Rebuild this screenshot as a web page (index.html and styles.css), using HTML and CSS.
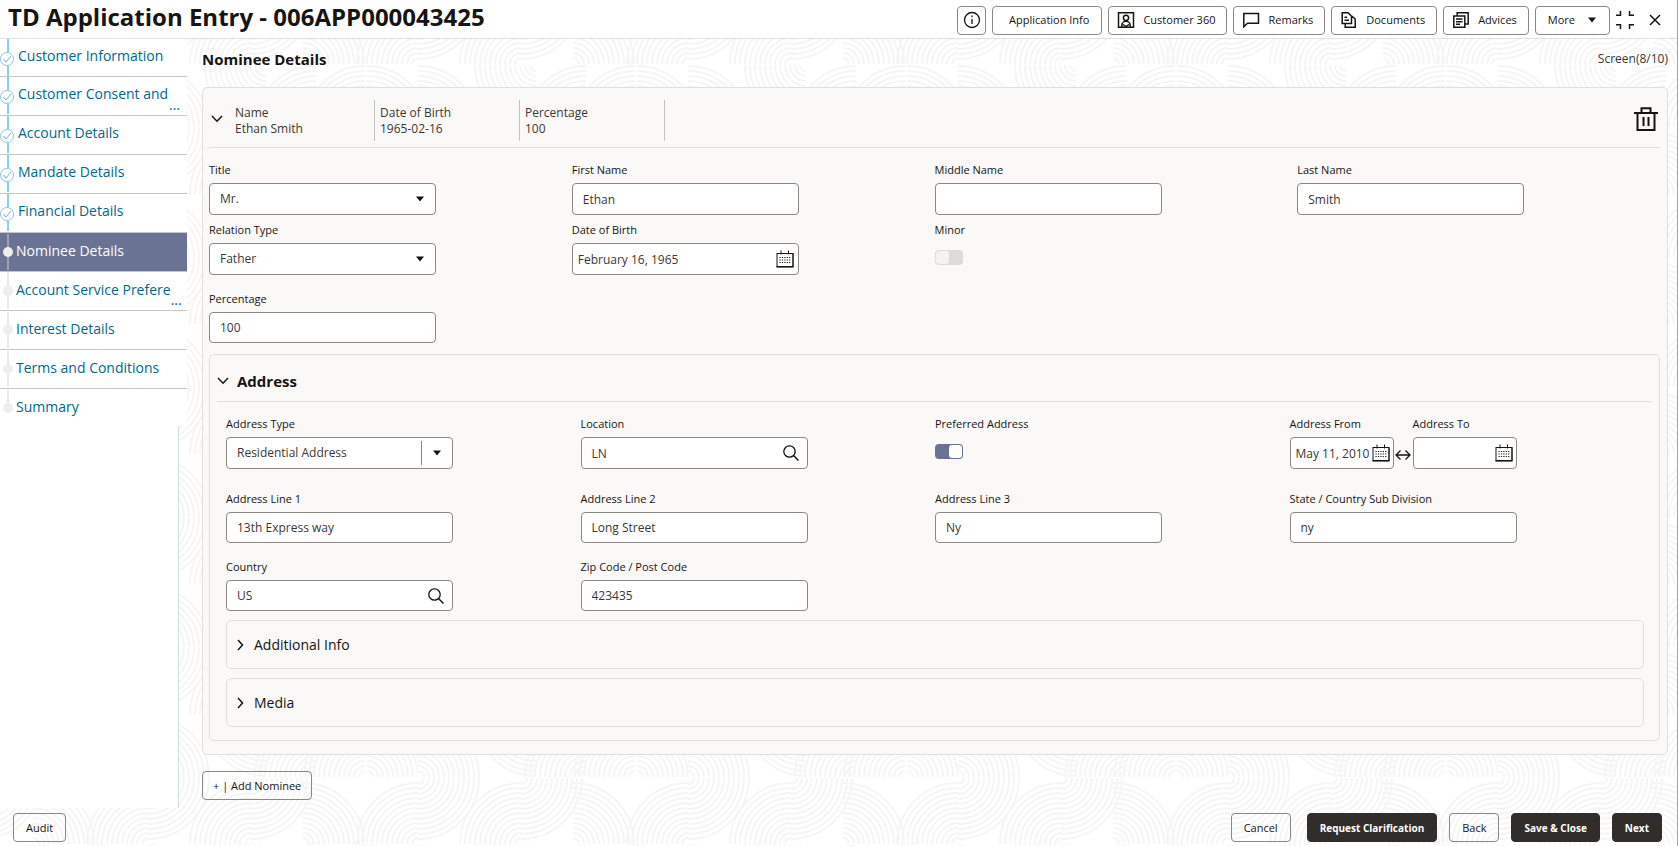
FILE: index.html
```html
<!DOCTYPE html>
<html lang="en">
<head>
<meta charset="utf-8">
<title>TD Application Entry</title>
<link rel="stylesheet" href="styles.css">
</head>
<body>
<svg class="backdrop" aria-hidden="true">
  <defs>
    <g id="arcs" fill="none" stroke="#f5f5f5" stroke-width="2">
      <path d="M6 0A6 6 0 0 1 0 6M11 0A11 11 0 0 1 0 11M16 0A16 16 0 0 1 0 16M21 0A21 21 0 0 1 0 21M26 0A26 26 0 0 1 0 26M31 0A31 31 0 0 1 0 31M36 0A36 36 0 0 1 0 36M41 0A41 41 0 0 1 0 41M46 0A46 46 0 0 1 0 46M51 0A51 51 0 0 1 0 51M56 0A56 56 0 0 1 0 56M61 0A61 61 0 0 1 0 61"/>
    </g>
    <pattern id="waves" x="148" y="-3" width="270" height="130" patternUnits="userSpaceOnUse">
      <use href="#arcs" transform="translate(0 1)"/>
      <use href="#arcs" transform="translate(103 1)"/>
      <use href="#arcs" transform="translate(103 67) rotate(180)"/>
      <use href="#arcs" transform="translate(155 67) rotate(270)"/>
      <use href="#arcs" transform="translate(270 67) rotate(180)"/>
      <use href="#arcs" transform="translate(0 130) rotate(270)"/>
      <use href="#arcs" transform="translate(118 68) rotate(90)"/>
      <use href="#arcs" transform="translate(168 130) rotate(180)"/>
      <use href="#arcs" transform="translate(217 130) rotate(180)"/>
      <use href="#arcs" transform="translate(219 130) rotate(270)"/>
    </pattern>
    <symbol id="i-done" viewBox="0 0 16 38">
      <path d="M8 0v13M8 27v10" stroke="#0aa5db" fill="none"/>
      <circle cx="7" cy="20" r="6.500" fill="#fff" stroke="#8fc3e6"/>
      <path d="M3.500 20l2.500 3 5-6" fill="none" stroke="#6aafe0"/>
    </symbol>
    <symbol id="i-todo" viewBox="0 0 16 38">
      <path d="M8 1v36" stroke="#d3d1cf" fill="none"/>
      <circle cx="8" cy="19" r="5" fill="#efeeed"/>
    </symbol>
    <symbol id="i-last" viewBox="0 0 16 38">
      <path d="M8 1v18" stroke="#d3d1cf" fill="none"/>
      <circle cx="8" cy="19" r="5" fill="#efeeed"/>
    </symbol>
    <symbol id="i-caret" viewBox="0 0 10 6"><path d="M1 .5h8L5 5.500z" fill="#161513"/></symbol>
    <symbol id="i-cal" viewBox="0 0 18 18">
      <path d="M1 3.500h16v13H1M1 3v14M17 3v14M5 .5v4M12.500 .5v4" fill="none" stroke="#161513"/>
      <path d="M.5 16.800h17" stroke="#161513" stroke-width="1.600"/>
      <path d="M3.500 7.500h11M3.500 10h11M3.500 12.500h11" stroke="#161513" stroke-width="1.200" stroke-dasharray="1.200 1.200"/>
    </symbol>
    <symbol id="i-search" viewBox="0 0 16 16">
      <circle cx="6.500" cy="6.500" r="5.700" fill="none" stroke="#161513" stroke-width="1.300"/>
      <path d="M10.500 10.500l5 5" stroke="#161513" stroke-width="1.500"/>
    </symbol>
    <symbol id="i-down" viewBox="0 0 12 8"><path d="M1 1l5 5.200L11 1" fill="none" stroke="#161513" stroke-width="1.500"/></symbol>
    <symbol id="i-right" viewBox="0 0 8 12"><path d="M1 1l4.500 5L1 11" fill="none" stroke="#161513" stroke-width="1.500"/></symbol>
  </defs>
  <rect width="100%" height="100%" fill="url(#waves)"/>
</svg>

<header class="topbar">
  <h1 class="page-title">TD Application Entry - 006APP000043425</h1>
  <div class="tools">
    <button class="btn btn-square" type="button" aria-label="Information">
      <svg width="18" height="18" viewBox="0 0 18 18" fill="none" stroke="#161513" stroke-width="1.300"><circle cx="9" cy="9" r="7.500"/><path d="M9 8v5M9 4.500v1.800"/></svg>
    </button>
    <button class="btn btn-plain" type="button">Application Info</button>
    <button class="btn btn-tool" type="button">
      <svg width="18" height="18" viewBox="0 0 18 18" fill="none" stroke="#161513" stroke-width="1.500"><path d="M1.500 1.700h15v14.600h-15z"/><circle cx="9" cy="6.800" r="2.600"/><path d="M4.800 16v-1.500a4.200 4.200 0 0 1 8.400 0V16M6 13.500l3 2 3-2"/></svg>
      Customer 360
    </button>
    <button class="btn btn-tool" type="button">
      <svg width="18" height="18" viewBox="0 0 18 18" fill="none" stroke="#161513" stroke-width="1.500"><path d="M1.800 2.500h14.700v9.800H5.500l-3.700 3.500z"/></svg>
      Remarks
    </button>
    <button class="btn btn-tool" type="button">
      <svg width="18" height="18" viewBox="0 0 18 18" fill="none" stroke="#161513" stroke-width="1.500"><path d="M2.200 1.700h6l3.300 3.500v7.300H2.200zM4.500 6.300h2.500M4.500 9.200h4.500M5.200 13v3.300h10V8l-3.500-3"/></svg>
      Documents
    </button>
    <button class="btn btn-tool" type="button">
      <svg width="18" height="18" viewBox="0 0 18 18" fill="none" stroke="#161513" stroke-width="1.500"><path d="M1.800 5h11v11.300h-11zM5.200 4.500V1.700h11v11.300h-3M4 8h6.500M4 10.700h6.500M4 13.300h4"/></svg>
      Advices
    </button>
    <button class="btn btn-more" type="button">More <svg width="10" height="6"><use href="#i-caret"/></svg></button>
    <button class="icon-btn" type="button" aria-label="Exit full screen">
      <svg width="18" height="18" viewBox="0 0 18 18" fill="none" stroke="#161513" stroke-width="1.500"><path d="M0 4.200h4.500V0M18 4.200h-4.500V0M0 13.800h4.500V18M18 13.800h-4.500V18"/></svg>
    </button>
    <button class="icon-btn" type="button" aria-label="Close">
      <svg width="12" height="12" viewBox="0 0 12 12" fill="none" stroke="#161513" stroke-width="1.500"><path d="M1 1l10 10M11 1L1 11"/></svg>
    </button>
  </div>
</header>

<div class="body">
  <nav class="side" aria-label="Steps">
    <ol class="steps">
      <li class="step done"><svg width="16" height="38"><use href="#i-done"/></svg><a href="#">Customer Information</a></li>
      <li class="step done"><svg width="16" height="38"><use href="#i-done"/></svg><a href="#">Customer Consent and</a><span class="dots">...</span></li>
      <li class="step done"><svg width="16" height="38"><use href="#i-done"/></svg><a href="#">Account Details</a></li>
      <li class="step done"><svg width="16" height="38"><use href="#i-done"/></svg><a href="#">Mandate Details</a></li>
      <li class="step done"><svg width="16" height="38"><use href="#i-done"/></svg><a href="#">Financial Details</a></li>
      <li class="step current"><svg width="16" height="38"><use href="#i-todo"/></svg><a href="#" aria-current="step">Nominee Details</a></li>
      <li class="step"><svg width="16" height="38"><use href="#i-todo"/></svg><a href="#">Account Service Prefere</a><span class="dots">...</span></li>
      <li class="step"><svg width="16" height="38"><use href="#i-todo"/></svg><a href="#">Interest Details</a></li>
      <li class="step"><svg width="16" height="38"><use href="#i-todo"/></svg><a href="#">Terms and Conditions</a></li>
      <li class="step"><svg width="16" height="38"><use href="#i-last"/></svg><a href="#">Summary</a></li>
    </ol>
    <div class="side-rest"></div>
  </nav>

  <main class="main">
    <div class="main-head">
      <h2 class="section-title">Nominee Details</h2>
      <span class="screen">Screen(8/10)</span>
    </div>

    <section class="card">
      <div class="card-head">
        <button class="icon-btn card-toggle" type="button" aria-label="Collapse nominee"><svg width="12" height="8"><use href="#i-down"/></svg></button>
        <dl class="facts">
          <div class="fact"><dt>Name</dt><dd>Ethan Smith</dd></div>
          <div class="fact"><dt>Date of Birth</dt><dd>1965-02-16</dd></div>
          <div class="fact"><dt>Percentage</dt><dd>100</dd></div>
        </dl>
        <button class="icon-btn trash" type="button" aria-label="Delete nominee">
          <svg width="24" height="24" viewBox="0 0 24 24" fill="none" stroke="#161513" stroke-width="2"><path d="M0 6h24M3.500 6v17h17V6M7.500 5V1.200h9V5"/><path d="M9.500 10v9M14.500 10v9"/></svg>
        </button>
      </div>

      <div class="grid">
        <div class="field"><label for="title">Title</label><div class="box"><select id="title"><option>Mr.</option></select><svg class="mark" width="10" height="6"><use href="#i-caret"/></svg></div></div>
        <div class="field"><label for="first">First Name</label><div class="box"><input id="first" type="text" value="Ethan"></div></div>
        <div class="field"><label for="middle">Middle Name</label><div class="box"><input id="middle" type="text"></div></div>
        <div class="field"><label for="last">Last Name</label><div class="box"><input id="last" type="text" value="Smith"></div></div>
        <div class="field"><label for="relation">Relation Type</label><div class="box"><select id="relation"><option>Father</option></select><svg class="mark" width="10" height="6"><use href="#i-caret"/></svg></div></div>
        <div class="field"><label for="dob">Date of Birth</label><div class="box date"><input id="dob" type="text" value="February 16, 1965"><svg width="18" height="18"><use href="#i-cal"/></svg></div></div>
        <div class="field"><label for="minor">Minor</label><input class="toggle" id="minor" type="checkbox" disabled></div>
      </div>
      <div class="grid compact spaced">
        <div class="field"><label for="percent">Percentage</label><div class="box"><input id="percent" type="text" value="100"></div></div>
      </div>

      <section class="address">
        <div class="address-head">
          <button class="icon-btn" type="button" aria-label="Collapse address"><svg width="12" height="8"><use href="#i-down"/></svg></button>
          <h3 class="section-title">Address</h3>
        </div>
        <div class="address-body">
          <div class="grid first">
            <div class="field"><label for="atype">Address Type</label><div class="box split"><select id="atype"><option>Residential Address</option></select><svg class="mark" width="10" height="6"><use href="#i-caret"/></svg></div></div>
            <div class="field"><label for="location">Location</label><div class="box search"><input id="location" type="text" value="LN"><svg width="16" height="16"><use href="#i-search"/></svg></div></div>
            <div class="field"><label for="preferred">Preferred Address</label><input class="toggle" id="preferred" type="checkbox" checked></div>
            <div class="range">
              <div class="field"><label for="from">Address From</label><div class="box date"><input id="from" type="text" value="May 11, 2010"><svg width="18" height="18"><use href="#i-cal"/></svg></div></div>
              <svg class="between" width="16" height="12" viewBox="0 0 16 12" fill="none" stroke="#161513" stroke-width="1.300"><path d="M1 6h14M5.500 1.500L1 6l4.500 4.500M10.500 1.500L15 6l-4.500 4.500"/></svg>
              <div class="field"><label for="to">Address To</label><div class="box date"><input id="to" type="text"><svg width="18" height="18"><use href="#i-cal"/></svg></div></div>
            </div>
          </div>
          <div class="grid compact">
            <div class="field"><label for="line1">Address Line 1</label><div class="box"><input id="line1" type="text" value="13th Express way"></div></div>
            <div class="field"><label for="line2">Address Line 2</label><div class="box"><input id="line2" type="text" value="Long Street"></div></div>
            <div class="field"><label for="line3">Address Line 3</label><div class="box"><input id="line3" type="text" value="Ny"></div></div>
            <div class="field"><label for="state">State / Country Sub Division</label><div class="box"><input id="state" type="text" value="ny"></div></div>
          </div>
          <div class="grid compact spaced">
            <div class="field"><label for="country">Country</label><div class="box search"><input id="country" type="text" value="US"><svg width="16" height="16"><use href="#i-search"/></svg></div></div>
            <div class="field"><label for="zip">Zip Code / Post Code</label><div class="box"><input id="zip" type="text" value="423435"></div></div>
          </div>
          <button class="fold" type="button"><svg width="8" height="12"><use href="#i-right"/></svg>Additional Info</button>
          <button class="fold" type="button"><svg width="8" height="12"><use href="#i-right"/></svg>Media</button>
        </div>
      </section>
    </section>

    <button class="btn add" type="button">+ | Add Nominee</button>
  </main>
</div>

<footer class="footer">
  <button class="btn" type="button">Audit</button>
  <div class="actions">
    <button class="btn cancel" type="button">Cancel</button>
    <button class="btn dark" type="button">Request Clarification</button>
    <button class="btn" type="button">Back</button>
    <button class="btn dark" type="button">Save &amp; Close</button>
    <button class="btn dark" type="button">Next</button>
  </div>
</footer>
</body>
</html>
```
FILE: styles.css
```css
* { box-sizing: border-box; }

body {
  margin: 0;
  min-height: 100vh;
  display: flex;
  flex-direction: column;
  position: relative;
  background: #fff;
  border-right: 1px solid #a3a3a3;
  color: #161513;
  font: 12px/16px "Open Sans", "Noto Sans", sans-serif;
}

button, input, select { font: inherit; color: inherit; margin: 0; }
button { cursor: pointer; }
h1, h2, h3, dl, dd, ol { margin: 0; padding: 0; }
svg { display: block; flex: none; }

.backdrop {
  position: absolute;
  inset: 0;
  width: 100%;
  height: 100%;
  z-index: -1;
}

/* Header */
.topbar {
  display: flex;
  align-items: center;
  justify-content: space-between;
  height: 39px;
  padding: 0 16px 0 8px;
  background: #fff;
  border-bottom: 1px solid #e3e1df;
}
.page-title { font-size: 24px; line-height: 32px; font-weight: 700; padding-bottom: 4px; }
.tools { display: flex; align-items: center; gap: 6px; padding-top: 2px; }

.btn {
  display: inline-flex;
  align-items: center;
  justify-content: center;
  height: 29px;
  padding: 0 12px;
  background: transparent;
  border: 1px solid #8b8884;
  border-radius: 4px;
  font-size: 11px;
  font-weight: 500;
  white-space: nowrap;
}
.btn-square { width: 29px; padding: 0; }
.btn-plain { padding: 0 12px 0 16px; }
.btn-tool { gap: 8px; padding: 0 11px 0 8px; }
.btn-more { gap: 12px; }
.icon-btn {
  display: flex;
  align-items: center;
  padding: 0;
  border: 0;
  background: none;
}
.tools .icon-btn + .icon-btn { margin-left: 9px; }

/* Step list */
.body { flex: 1; display: flex; }
.side { width: 187px; flex: none; display: flex; flex-direction: column; }
.steps { list-style: none; background: #fff; }
.step {
  display: flex;
  align-items: center;
  height: 39px;
  padding-right: 7px;
  border-bottom: 1px solid #c9c6c2;
  font-size: 14px;
  line-height: 20px;
}
.step:first-child { height: 38px; }
.step:last-child { border-bottom: 0; height: 37px; }
.step a { color: #00688c; text-decoration: none; white-space: nowrap; padding-bottom: 2px; }
.step.done a { padding: 0 0 4px 2px; }
.step.current { background: #6b7394; }
.step.current a { color: #fff; }
.dots { margin-left: auto; align-self: flex-end; color: #00688c; }
.side-rest {
  flex: 1;
  width: 179px;
  background: #fff;
  border-right: 1px solid #cfe0e8;
}

/* Main area */
.main { flex: 1; min-width: 0; padding: 8px 9px 8px 15px; }
.main-head {
  display: flex;
  justify-content: space-between;
  align-items: center;
  margin-bottom: 16px;
}
.section-title { font-size: 15px; line-height: 24px; font-weight: 700; }
.screen { font-size: 12px; color: #3a3735; }

.card {
  padding: 0 7px 13px 6px;
  background: #faf9f8;
  border: 1px solid #e1dfdc;
  border-radius: 5px;
}
.card-head {
  display: flex;
  align-items: center;
  height: 60px;
  padding: 12px 2px 6px;
  margin-bottom: 14px;
  border-bottom: 1px solid #e1dfdc;
}
.card-head .icon-btn { padding-bottom: 3px; }
.card-toggle { width: 19px; }
.facts { display: flex; color: #3a3735; }
.fact {
  width: 145px;
  height: 41px;
  padding: 5px 0 0 5px;
  border-right: 1px solid #c4c1bd;
}
.trash { margin-left: auto; }

.grid {
  display: grid;
  grid-template-columns: repeat(4, 1fr);
  row-gap: 7px;
}
.grid.spaced { margin-top: 16px; }
.grid.first { margin-bottom: 22px; }

.field { width: 227px; display: flex; flex-direction: column; }
.field label { font-size: 11px; font-weight: 500; margin-bottom: 5px; white-space: nowrap; }
.box {
  display: flex;
  align-items: center;
  height: 32px;
  padding: 0 10px;
  background: #fff;
  border: 1px solid #8b8884;
  border-radius: 4px;
}
.compact .box { height: 31px; }
.box input, .box select {
  flex: 1;
  width: 100%;
  min-width: 0;
  height: 28px;
  padding: 0;
  border: 0;
  outline: 0;
  background: transparent;
  appearance: none;
  color: #3a3735;
}
.box.date { padding: 0 4px 0 5px; }
.box.search { padding-right: 8px; }
.box.split select { height: 24px; border-right: 1px solid #8b8884; margin-right: 10px; }

.toggle {
  appearance: none;
  width: 28px;
  height: 15px;
  margin-top: 7px;
  padding: 1px;
  border-radius: 4px;
  background: #dcdbd9;
}
.toggle::before {
  content: "";
  display: block;
  width: 13px;
  height: 13px;
  border-radius: 3px;
  background: #f4f3f2;
}
.toggle:checked { background: #6b7394; }
.toggle:checked::before { margin-left: auto; background: #fff; }

.range { display: flex; align-items: flex-end; justify-content: space-between; width: 227px; }
.range .field { width: 104px; }
.range .box { padding-right: 3px; }
.between { margin-bottom: 8px; }

/* Address panel */
.address {
  margin-top: 11px;
  padding: 0 7px 13px;
  border: 1px solid #e1dfdc;
  border-radius: 5px;
}
.address-head {
  display: flex;
  align-items: center;
  gap: 8px;
  height: 47px;
  padding-top: 6px;
  border-bottom: 1px solid #e1dfdc;
}
.address-body { padding: 14px 8px 0 9px; }
.fold {
  display: flex;
  align-items: center;
  gap: 9px;
  width: 100%;
  height: 49px;
  margin-top: 9px;
  padding: 0 10px;
  background: none;
  border: 1px solid #e1dfdc;
  border-radius: 5px;
  font-size: 14px;
  line-height: 20px;
}

.add { margin-top: 16px; padding: 0 10px; }

/* Footer */
.footer {
  display: flex;
  justify-content: space-between;
  padding: 5px 15px 4px 13px;
}
.actions { display: flex; gap: 12px; }
.cancel { margin-right: 4px; }
.btn.dark { background: #312d2a; border-color: #312d2a; color: #fff; font-weight: 700; font-size: 10px; }
```
